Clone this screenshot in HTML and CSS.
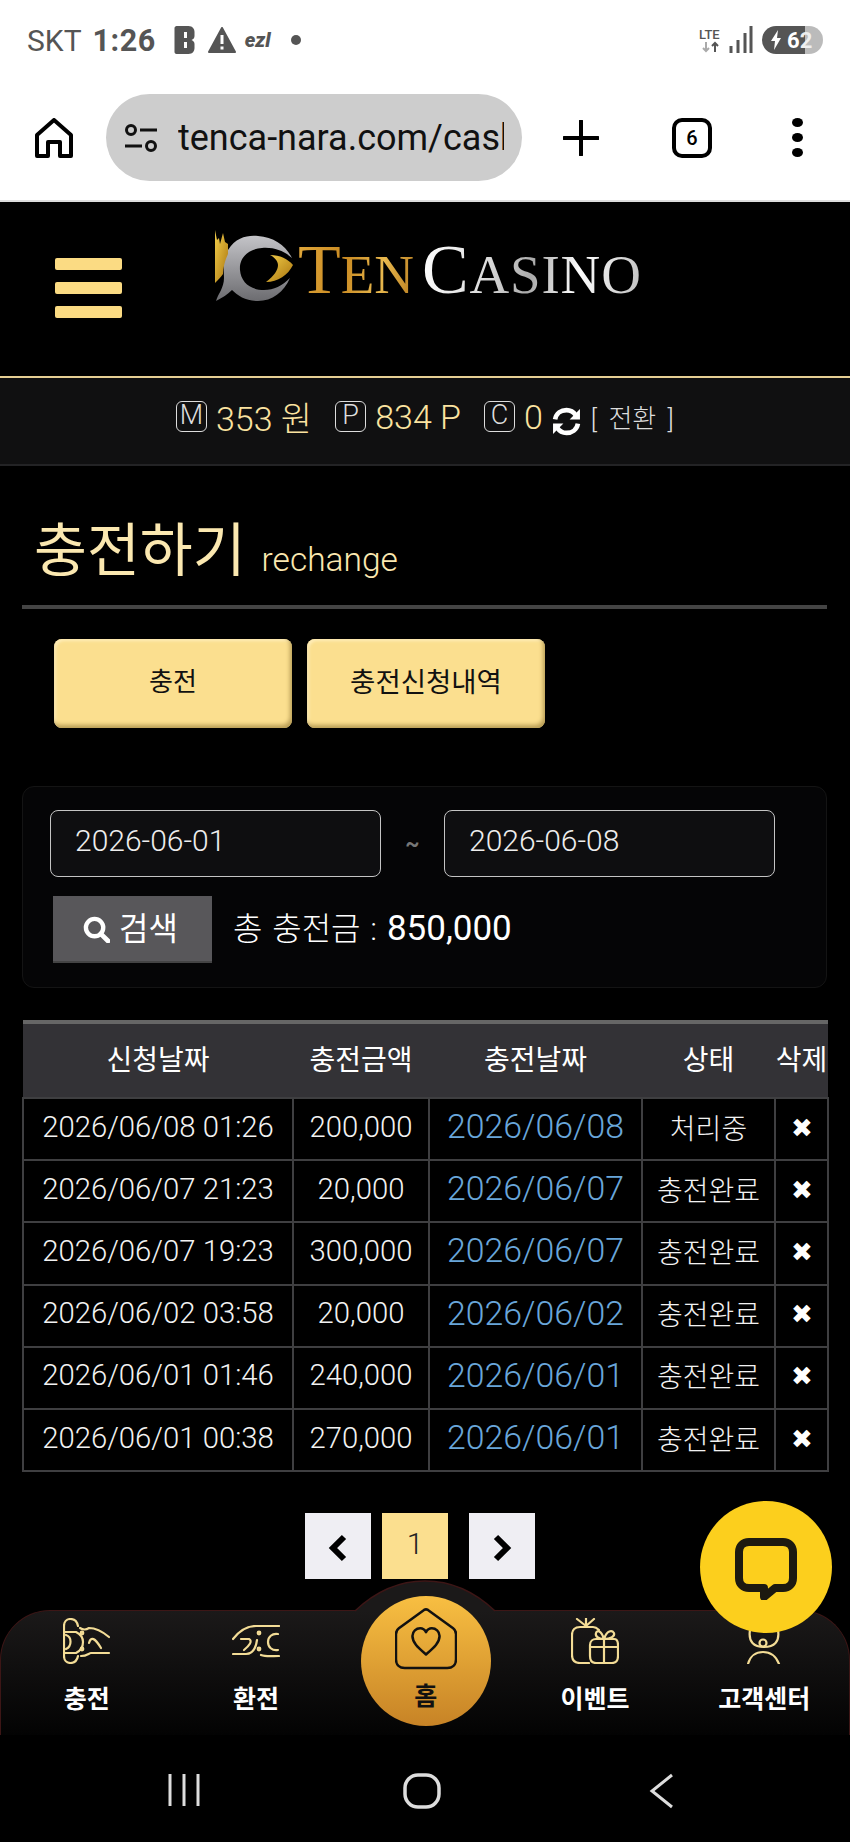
FILE: index.html
```html
<!DOCTYPE html>
<html lang="ko">
<head>
  <meta charset="UTF-8" />
  <meta name="viewport" content="width=device-width, initial-scale=1.0"/>
  <title>Ten Casino - rechange</title>
  <link rel="stylesheet" href="styles.css">
</head>
<body>

<div class="phone">

  <div class="statusbar">
    <div class="status-left">
      <span class="carrier">SKT</span>
      <span class="clock">1:26</span>
      <svg class="st-b" viewBox="0 0 20 28"><path d="M2 0H14C18 0 20 3 20 6V10C20 12 19 13 17 14C19 15 20 16 20 18V22C20 25 18 28 14 28H2C1 28 0 27 0 26V2C0 1 1 0 2 0Z" fill="#555"/><path d="M11 6V12M11 16V22" stroke="#fff" stroke-width="3"/></svg>
      <svg class="st-warn" viewBox="0 0 28 26"><path d="M14 1L27 25H1Z" fill="#555" stroke="#555" stroke-width="2" stroke-linejoin="round"/><path d="M14 8V17M14 19.5V22.5" stroke="#fff" stroke-width="3"/></svg>
      <span class="st-ezl">ezl</span>
      <span class="st-dot"></span>
    </div>
    <div class="status-right">
      <div class="st-lte">LTE<svg viewBox="0 0 24 10"><path d="M7 0V9M4 6L7 9L10 6" stroke="#aaa" stroke-width="2" fill="none"/><path d="M16 10V1M13 4L16 1L19 4" stroke="#555" stroke-width="2" fill="none"/></svg></div>
      <svg class="st-signal" viewBox="0 0 24 28"><path d="M2 20V27M9 14V27M16 7V27M22 0V27" stroke="#555" stroke-width="3" fill="none"/></svg>
      <div class="st-battery"><svg viewBox="0 0 12 20"><path d="M8 0L1 11H5L4 20L11 8H7Z" fill="#fff"/></svg><span>6</span><span class="st-battery-rest">2</span></div>
    </div>
  </div>

  <div class="toolbar">
    <svg class="tb-home" viewBox="0 0 38 40"><path d="M19 2L36 17V38H25V24H13V38H2V17Z" fill="none" stroke="#000" stroke-width="4" stroke-linejoin="round"/></svg>
    <div class="url-pill">
      <svg class="tb-tune" viewBox="0 0 34 28"><circle cx="7" cy="6" r="4.500" fill="none" stroke="#111" stroke-width="3"/><path d="M16 6H33M1 22H18" stroke="#111" stroke-width="3"/><circle cx="27" cy="22" r="4.500" fill="none" stroke="#111" stroke-width="3"/></svg>
      <span class="url-text">tenca-nara.com/cash</span>
    </div>
    <svg class="tb-plus" viewBox="0 0 36 36"><path d="M18 1V35M1 18H35" stroke="#000" stroke-width="4" stroke-linecap="round"/></svg>
    <div class="tb-tabs">6</div>
    <div class="tb-menu"><i></i><i></i><i></i></div>
  </div>

  <div class="site-header">
    <div class="burger"><i></i><i></i><i></i></div>
    <div class="logo">
      <svg class="logo-mark" viewBox="0 0 80 72">
        <defs>
          <linearGradient id="goldGrad" x1="0" y1="0" x2="1" y2="1"><stop offset="0" stop-color="#f4cf4a"/><stop offset="1" stop-color="#a8740f"/></linearGradient>
          <linearGradient id="greyGrad" x1="0" y1="0" x2="0" y2="1"><stop offset="0" stop-color="#c4c4c8"/><stop offset="1" stop-color="#6c6c70"/></linearGradient>
        </defs>
        <path d="M2 71C4 64 10 58 10 48C10 38 8 30 14 20C22 7 34 5 44 6C60 7 72 16 78 28C70 21 60 17 48 18C34 19 25 28 26 40C27 52 36 60 50 60C60 60 68 56 76 48C70 62 58 71 44 71C32 71 24 66 18 60C14 64 8 68 2 71Z" fill="url(#greyGrad)"/>
        <path d="M1 0L3 10L5 8L6 14L9 3L11 12L14 14V24C11 30 9 38 9 44C7 47 4 50 1 53Z" fill="url(#goldGrad)"/>
        <path d="M56 25C66 25 74 29 79 35C74 45 64 52 52 52C60 46 64 40 64 35C64 31 60 27 56 25Z" fill="url(#goldGrad)"/>
      </svg>
      <span class="logo-ten">T<small>EN</small></span>
      <span class="logo-casino">C<small>ASINO</small></span>
    </div>
  </div>

  <div class="wallet">
    <span class="wallet-badge">M</span><span class="wallet-val">353 원</span>
    <span class="wallet-badge second">P</span><span class="wallet-val">834 P</span>
    <span class="wallet-badge second">C</span><span class="wallet-val">0</span>
    <svg class="wallet-refresh" viewBox="0 0 28 28"><path d="M3 12C4 6 9 3 14 3C18 3 21 5 23 8M25 16C24 22 19 25 14 25C10 25 7 23 5 20" fill="none" stroke="#fff" stroke-width="4.5"/><path d="M27 2V12H17ZM1 26V16H11Z" fill="#fff"/></svg>
    <span class="wallet-switch">[ 전환 ]</span>
  </div>

  <main class="content">
    <div class="page-title"><h1>충전하기</h1><span>rechange</span></div>

    <div class="tab-buttons">
      <a class="tab-btn">충전</a>
      <a class="tab-btn">충전신청내역</a>
    </div>

    <div class="search-box">
      <div class="date-row">
        <div class="date-input">2026-06-01</div>
        <span class="tilde">~</span>
        <div class="date-input">2026-06-08</div>
      </div>
      <div class="search-row">
        <button class="search-btn">
          <svg viewBox="0 0 28 28"><circle cx="12" cy="12" r="9" fill="none" stroke="#fff" stroke-width="4.5"/><path d="M18.5 18.5L26 26" stroke="#fff" stroke-width="5" stroke-linecap="round"/></svg>
          검색
        </button>
        <div class="total">총 충전금 : <b>850,000</b></div>
      </div>
    </div>

    <table class="history">
      <colgroup>
        <col class="c-req"><col class="c-amt"><col class="c-date"><col class="c-state"><col class="c-del">
      </colgroup>
      <thead>
        <tr><th>신청날짜</th><th>충전금액</th><th>충전날짜</th><th>상태</th><th>삭제</th></tr>
      </thead>
      <tbody>
        <tr><td>2026/06/08 01:26</td><td>200,000</td><td class="blue">2026/06/08</td><td class="state">처리중</td><td class="del">✖</td></tr>
        <tr><td>2026/06/07 21:23</td><td>20,000</td><td class="blue">2026/06/07</td><td class="state">충전완료</td><td class="del">✖</td></tr>
        <tr><td>2026/06/07 19:23</td><td>300,000</td><td class="blue">2026/06/07</td><td class="state">충전완료</td><td class="del">✖</td></tr>
        <tr><td>2026/06/02 03:58</td><td>20,000</td><td class="blue">2026/06/02</td><td class="state">충전완료</td><td class="del">✖</td></tr>
        <tr><td>2026/06/01 01:46</td><td>240,000</td><td class="blue">2026/06/01</td><td class="state">충전완료</td><td class="del">✖</td></tr>
        <tr><td>2026/06/01 00:38</td><td>270,000</td><td class="blue">2026/06/01</td><td class="state">충전완료</td><td class="del">✖</td></tr>
      </tbody>
    </table>

    <div class="pager">
      <a class="page-arrow"><svg viewBox="0 0 20 28"><path d="M16 3L5 14L16 25" fill="none" stroke="#000" stroke-width="6"/></svg></a>
      <a class="page-num">1</a>
      <a class="page-arrow next"><svg viewBox="0 0 20 28"><path d="M4 3L15 14L4 25" fill="none" stroke="#000" stroke-width="6"/></svg></a>
    </div>
  </main>

  <nav class="bottom-nav">
    <svg class="nav-hump" viewBox="0 0 140 32"><path d="M0 31C22 10 44 1 70 1C96 1 118 10 140 31Z" fill="#1b1919"/><path d="M0 31C22 10 44 1 70 1C96 1 118 10 140 31" fill="none" stroke="#3d1616" stroke-width="1.5"/></svg>

    <a class="nav-item">
      <svg class="nav-icon" viewBox="0 0 48 46" fill="none" stroke="#f3dc96" stroke-width="2.2" stroke-linecap="round">
        <path d="M15 8C14 3 11 1 7.500 1C3.500 1 1 4 1 8V38C1 42 3.500 45 7.500 45C11 45 14 43 15 38"/>
        <path d="M1 14H13C17 16 20 20 20 24C20 29 17 33 13 35H1"/>
        <path d="M3 17C9 19 9 28 3 31"/>
        <circle cx="19" cy="15" r="1.300"/><circle cx="19" cy="31" r="1.300"/>
        <path d="M17 10C20 12 23 12 26 10C34 10 40 14 46 19"/>
        <path d="M26 25C28 18 32 20 38 30"/>
        <path d="M18 38C24 38 26 35 28 35H46"/>
      </svg>
      <span>충전</span>
    </a>
    <a class="nav-item">
      <svg class="nav-icon narrow" viewBox="0 0 48 34" fill="none" stroke="#f3dc96" stroke-width="2.2" stroke-linecap="round">
        <path d="M47 1H24C16 1 8 5 1 14"/>
        <path d="M9 14H17C21 16 17 21 12 25"/>
        <path d="M1 29H14C21 29 24 22 25 15"/>
        <path d="M29 30C34 32 40 31 47 31"/>
        <path d="M46 9C40 8 36 12 36 17C36 22 40 26 46 25"/>
        <circle cx="27" cy="8" r="1.300"/><circle cx="27" cy="24" r="1.300"/>
      </svg>
      <span>환전</span>
    </a>
    <a class="nav-item">
      <div class="home-circle">
        <svg class="home-icon" viewBox="0 0 64 64" fill="none" stroke="#111" stroke-width="2.600" stroke-linejoin="round">
          <path d="M30 2C31 1.400 33 1.400 34 2L60 21C62 22.500 63 24 63 27V53C63 59 59 62 54 62H10C5 62 1 59 1 53V27C1 24 2 22.500 4 21Z"/>
          <path d="M32 48C24 41 18 36 18 29C18 24 22 21 26 21C29 21 31 23 32 25C33 23 35 21 38 21C42 21 46 24 46 29C46 36 40 41 32 48Z"/>
        </svg>
        <span>홈</span>
      </div>
    </a>
    <a class="nav-item">
      <svg class="nav-icon" viewBox="0 0 48 46" fill="none" stroke="#f3dc96" stroke-width="2.200" stroke-linecap="round" stroke-linejoin="round">
        <path d="M28 12C26 10 24 9 22 9H9C4 9 1 12 1 17V37C1 42 4 45 9 45H18"/>
        <path d="M6 1L15 8L23 1M15 0V8"/>
        <path d="M19 27C19 23 22 21 25 21H43C46 21 47 23 47 27V38C47 42 45 45 41 45H25C21 45 19 42 19 38Z"/>
        <path d="M19 29H47M33 21V45"/>
        <path d="M33 21C27 21 24 18 25 15C26 12 30 12 33 21C36 12 41 12 43 15C44 18 40 21 33 21Z"/>
      </svg>
      <span>이벤트</span>
    </a>
    <a class="nav-item">
      <svg class="nav-icon" viewBox="0 0 48 46" fill="none" stroke="#f3dc96" stroke-width="2.200" stroke-linecap="round">
        <path d="M10 12C8 24 14 29 24 29C34 29 40 24 38 12"/>
        <circle cx="23" cy="25" r="3.500"/>
        <path d="M8 46C10 38 16 34 23 34C30 34 36 38 39 46"/>
      </svg>
      <span>고객센터</span>
    </a>

    <a class="chat-btn">
      <svg viewBox="0 0 62 62"><path d="M14 4H48C54 4 58 8 58 14V40C58 46 54 50 48 50H40L29 59V50H14C8 50 4 46 4 40V14C4 8 8 4 14 4Z" fill="none" stroke="#1d1a10" stroke-width="8" stroke-linejoin="round"/></svg>
    </a>
  </nav>

  <div class="system-nav">
    <svg class="sys-recent" viewBox="0 0 34 34"><path d="M3 1V33M17 1V33M31 1V33" stroke="#ddd" stroke-width="3"/></svg>
    <svg class="sys-home" viewBox="0 0 38 36"><rect x="2" y="2" width="34" height="32" rx="13" fill="none" stroke="#ddd" stroke-width="3.500"/></svg>
    <svg class="sys-back" viewBox="0 0 26 36"><path d="M23 2L3 18L23 34" fill="none" stroke="#ddd" stroke-width="3"/></svg>
  </div>

</div>

</body>
</html>
```

FILE: styles.css
```css
* {
  box-sizing: border-box;
}

body {
  margin: 0;
  background: #000;
  font-family: Roboto, "Noto Sans CJK KR", sans-serif;
  color: #fff;
}

.phone {
  width: 850px;
  height: 1842px;
  display: flex;
  flex-direction: column;
  overflow: hidden;
  background: #000;
}

/* android status bar */
.statusbar {
  height: 80px;
  flex: none;
  background: #fff;
  display: flex;
  justify-content: space-between;
  align-items: center;
  padding: 0 27px 0 27px;
  color: #555;
}

.status-left {
  display: flex;
  align-items: center;
}

.carrier {
  font-size: 30px;
  margin-right: 11px;
}

.clock {
  font-size: 30.500px;
  font-weight: 700;
  letter-spacing: 0.5px;
  margin-right: 18px;
}

.st-b {
  width: 21px;
  height: 28px;
  margin-right: 13px;
}

.st-warn {
  width: 28px;
  height: 26px;
  margin-right: 9px;
}

.st-ezl {
  font-size: 20px;
  font-weight: 900;
  font-style: italic;
  margin-right: 20px;
}

.st-dot {
  width: 10px;
  height: 10px;
  border-radius: 50%;
  background: #555;
}

.status-right {
  display: flex;
  align-items: center;
}

.st-lte {
  font-size: 13px;
  font-weight: 500;
  line-height: 13px;
  width: 26px;
  margin-right: 4px;
}

.st-lte svg {
  display: block;
  width: 24px;
  height: 12px;
}

.st-signal {
  width: 24px;
  height: 28px;
  margin-right: 9px;
}

.st-battery {
  width: 61px;
  height: 28px;
  border-radius: 14px;
  background: linear-gradient(90deg, #555 0, #555 70%, #bbb 70%);
  display: flex;
  align-items: center;
  padding-left: 8px;
  color: #fff;
  font-size: 22px;
  font-weight: 700;
}

.st-battery svg {
  width: 12px;
  height: 20px;
  margin-right: 5px;
}

.st-battery-rest {
  color: #eee;
}

/* browser toolbar */
.toolbar {
  height: 122px;
  flex: none;
  background: #fff;
  border-bottom: 2px solid #ddd;
  display: flex;
  align-items: flex-start;
  padding-top: 14px;
  color: #000;
}

.tb-home {
  width: 38px;
  height: 40px;
  margin: 24px 0 0 35px;
}

.url-pill {
  width: 416px;
  height: 87px;
  margin-left: 33px;
  padding: 0 18px;
  border-radius: 44px;
  background: #cdcdcd;
  display: flex;
  align-items: center;
}

.tb-tune {
  width: 34px;
  height: 28px;
  flex: none;
  margin-right: 20px;
}

.url-text {
  font-size: 36px;
  white-space: nowrap;
  overflow: hidden;
  width: 327px;
  color: #111;
}

.tb-plus {
  width: 36px;
  height: 36px;
  margin: 26px 0 0 41px;
}

.tb-tabs {
  width: 40px;
  height: 40px;
  margin: 24px 0 0 73px;
  border: 4px solid #000;
  border-radius: 10px;
  font-size: 20px;
  font-weight: 500;
  display: flex;
  align-items: center;
  justify-content: center;
}

.tb-menu {
  width: 12px;
  margin: 24px 0 0 80px;
  display: flex;
  flex-direction: column;
  gap: 6px;
}

.tb-menu i {
  width: 11px;
  height: 9px;
  border-radius: 50%;
  background: #000;
}

/* site header */
.site-header {
  height: 174px;
  flex: none;
  background: #000;
  display: flex;
  align-items: flex-start;
}

.burger {
  width: 67px;
  margin: 56px 0 0 55px;
  display: flex;
  flex-direction: column;
  gap: 12px;
}

.burger i {
  height: 12px;
  border-radius: 2px;
  background: #fbdb83;
}

.logo {
  margin: 28px 0 0 91px;
  display: flex;
  align-items: baseline;
  font-family: "Liberation Serif", serif;
  font-size: 70px;
  line-height: 80px;
}

.logo small {
  font-size: 55px;
}

.logo-mark {
  width: 82px;
  height: 72px;
  align-self: flex-start;
  margin-right: 3px;
}

.logo-ten {
  background: linear-gradient(100deg, #e2a93c, #c98a22 40%, #e8b84e 70%, #b67a1c);
  -webkit-background-clip: text;
  background-clip: text;
  color: transparent;
  margin-right: 8px;
}

.logo-casino {
  background: linear-gradient(100deg, #fff, #ddd 30%, #aaa 50%, #fff 70%, #bbb);
  -webkit-background-clip: text;
  background-clip: text;
  color: transparent;
  letter-spacing: 0.8px;
}

/* wallet strip */
.wallet {
  height: 90px;
  flex: none;
  background: #101011;
  border-top: 2px solid #e6cf94;
  border-bottom: 2px solid #232325;
  display: flex;
  align-items: center;
  padding: 0 0 9px 176px;
  color: #fbe3a0;
}

.wallet-badge {
  width: 31px;
  height: 31px;
  border: 1.500px solid #ddd;
  border-radius: 6px;
  color: #ddd;
  font-size: 27px;
  font-weight: 300;
  line-height: 27px;
  text-align: center;
  margin-right: 9px;
  flex: none;
}

.wallet-badge.second {
  margin-left: 23px;
}

.wallet-val {
  font-size: 34px;
  font-weight: 300;
  white-space: nowrap;
}

.wallet-refresh {
  width: 29px;
  height: 29px;
  margin: 9px 0 0 9px;
}

.wallet-switch {
  color: #ddd;
  font-size: 26px;
  font-weight: 300;
  margin-left: 10px;
  word-spacing: 5px;
  white-space: nowrap;
}

/* page content */
.content {
  flex: 1;
  padding: 0 23px 0 22px;
}

.page-title {
  height: 143px;
  display: flex;
  align-items: baseline;
  padding: 50px 0 0 12px;
  border-bottom: 4px solid #444;
  color: #fbe8b0;
}

.page-title h1 {
  margin: 0;
  font-size: 57.500px;
  font-weight: 400;
  line-height: 72px;
}

.page-title span {
  font-size: 33.500px;
  font-weight: 300;
  margin-left: 16px;
}

.tab-buttons {
  display: flex;
  gap: 15px;
  margin: 30px 0 0 32px;
}

.tab-btn {
  width: 238px;
  height: 89px;
  border-radius: 8px;
  background: #fbdf8f;
  box-shadow: inset -2px -3px 4px #b79c55, inset 2px 2px 3px #ffeebb;
  color: #111;
  font-size: 26px;
  display: flex;
  align-items: center;
  justify-content: center;
  padding-bottom: 8px;
}

.tab-btn + .tab-btn {
  font-size: 27.500px;
}

.search-box {
  height: 202px;
  margin-top: 58px;
  padding: 23px 27px 0 27px;
  border: 1px solid #141414;
  border-radius: 12px;
  background: #050506;
}

.date-row {
  display: flex;
  align-items: center;
}

.date-input {
  width: 331px;
  height: 67px;
  border: 1.500px solid #c4c4c4;
  border-radius: 8px;
  background: #0e0e10;
  padding: 0 0 6px 24px;
  display: flex;
  align-items: center;
  font-size: 30px;
  font-weight: 300;
  color: #eee;
}

.tilde {
  width: 63px;
  text-align: center;
  color: #777;
  font-size: 22px;
  font-weight: 700;
}

.search-row {
  display: flex;
  align-items: center;
  margin: 19px 0 0 3px;
}

.search-btn {
  width: 159px;
  height: 67px;
  border: none;
  border-bottom: 2px solid #444;
  background: #58575a;
  color: #fff;
  font-family: inherit;
  font-size: 32px;
  display: flex;
  align-items: center;
  justify-content: center;
  gap: 9px;
  padding: 0 4px 6px 0;
}

.search-btn svg {
  width: 27px;
  height: 27px;
  margin-top: 7px;
}

.total {
  margin: 0 0 7px 21px;
  font-size: 32px;
  font-weight: 300;
  word-spacing: 2px;
  white-space: nowrap;
}

.total b {
  font-size: 35px;
  font-weight: 400;
}

/* history table */
.history {
  width: 805px;
  margin-top: 32px;
  border-collapse: collapse;
  table-layout: fixed;
  font-size: 29.300px;
}

.c-req { width: 270px; }
.c-amt { width: 136px; }
.c-date { width: 213px; }
.c-state { width: 133px; }
.c-del { width: 53px; }

.history th {
  height: 76px;
  background: #333236;
  border-top: 4px solid #666;
  font-size: 28px;
  font-weight: 400;
  padding: 0 0 6px 0;
  white-space: nowrap;
}

.history td {
  height: 62.200px;
  padding: 0 0 5px 0;
  border: 2.500px solid #3f3f41;
  text-align: center;
  font-weight: 300;
  white-space: nowrap;
  color: #f2f2f2;
}

.history td.blue {
  color: #69a6da;
  font-size: 33.800px;
}

.history td.state {
  font-size: 28px;
}

.history td.del {
  font-family: "DejaVu Sans", sans-serif;
  font-size: 26px;
  color: #fff;
  padding-bottom: 3px;
}

.pager {
  display: flex;
  margin: 41px 0 0 283px;
}

.page-arrow,
.page-num {
  width: 66px;
  height: 66px;
  display: flex;
  align-items: center;
  justify-content: center;
  color: #222;
}

.page-arrow {
  background: #efeef3;
}

.page-arrow svg {
  width: 20px;
  height: 28px;
  margin-top: 4px;
}

.page-num {
  background: #fbdf8f;
  margin-left: 11px;
  font-size: 30px;
  font-weight: 300;
  padding-bottom: 6px;
}

.page-arrow.next {
  margin-left: 21px;
}

/* bottom nav */
.bottom-nav {
  height: 125px;
  flex: none;
  position: relative;
  display: flex;
  padding-left: 1px;
  border: 1px solid #3d1616;
  border-bottom: none;
  border-radius: 50px 50px 0 0;
  background: linear-gradient(180deg, #1b1919 0%, #030303 100%);
}

.nav-hump {
  position: absolute;
  left: 354px;
  top: -31px;
  width: 140px;
  height: 32px;
}

.nav-item {
  width: 170px;
  height: 100%;
  position: relative;
  display: flex;
  flex-direction: column;
  align-items: center;
  justify-content: flex-start;
  padding-top: 7px;
  color: #fff;
  font-size: 25px;
  font-weight: 700;
}

.nav-icon {
  width: 48px;
  height: 46px;
  margin-bottom: 15px;
  flex: none;
}

.nav-icon.narrow {
  height: 34px;
  margin: 7px 0 20px;
}

.home-circle {
  position: absolute;
  left: 20px;
  top: -15px;
  width: 130px;
  height: 130px;
  border-radius: 50%;
  background: linear-gradient(180deg, #f8bf42 0%, #c78326 100%);
  color: #111;
  display: flex;
  flex-direction: column;
  align-items: center;
  padding-top: 12px;
}

.home-icon {
  width: 62px;
  height: 62px;
  margin-bottom: 6px;
  flex: none;
}

.chat-btn {
  position: absolute;
  right: 17px;
  top: -110px;
  width: 132px;
  height: 132px;
  border-radius: 50%;
  background: #fccf1d;
  display: flex;
  align-items: center;
  justify-content: center;
}

.chat-btn svg {
  width: 62px;
  height: 62px;
  margin-top: 4px;
}

/* android nav keys */
.system-nav {
  height: 107px;
  flex: none;
  background: #000;
  display: flex;
  align-items: flex-start;
  padding-top: 38px;
}

.sys-recent {
  width: 34px;
  height: 34px;
  margin-left: 167px;
}

.sys-home {
  width: 38px;
  height: 36px;
  margin-left: 202px;
}

.sys-back {
  width: 26px;
  height: 36px;
  margin-left: 208px;
}
```
